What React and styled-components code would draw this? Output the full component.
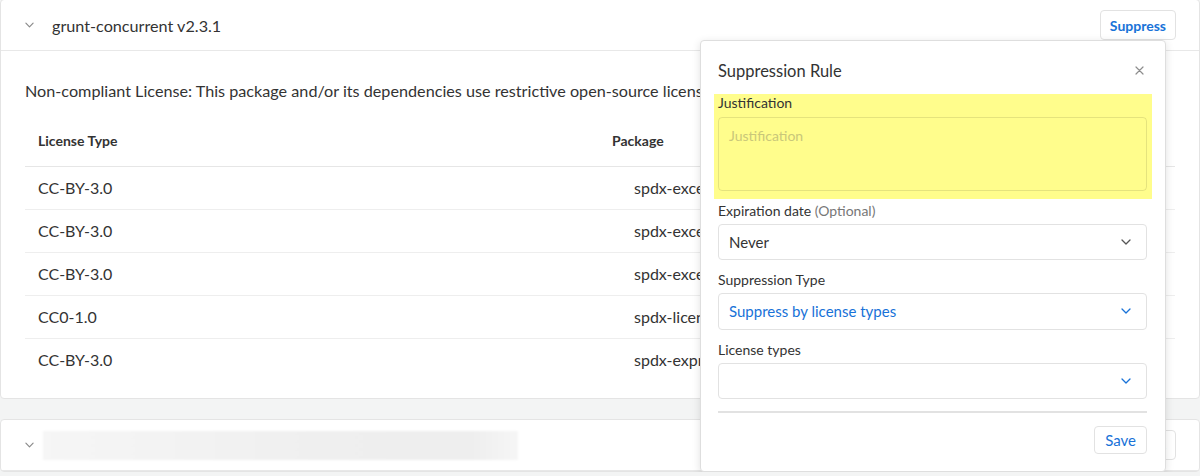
import React from "react";
import styled, { createGlobalStyle } from "styled-components";

const GlobalStyle = createGlobalStyle`
  html, body { margin: 0; padding: 0; }
  body {
    background: #f3f4f4;
    font-family: Lato, "Noto Sans", sans-serif;
    color: #333;
    overflow: hidden;
  }
  * { box-sizing: border-box; }
`;

const Page = styled.div`
  position: relative;
  margin-top: -1px;
  width: 1200px;
`;

const Card = styled.section`
  background: #fff;
  border: 1px solid #e4e4e4;
  border-radius: 4px;
  & + & { margin-top: 20px; }
`;

const CardHeader = styled.div`
  display: flex;
  align-items: center;
  height: 51px;
  padding: 0 23px 0 24px;
  border-bottom: 1px solid #e8e8e8;
`;

const Chevron = styled.svg`
  flex: none;
  width: 10px;
  height: 6px;
  color: ${(p) => p.$color || "#8a8a8a"};
`;

const Title = styled.h2`
  margin: 0 0 0 18px;
  font-size: 16.2px;
  font-weight: 400;
  color: #333;
`;

const Redacted = styled.div`
  margin-left: 9px;
  width: 475px;
  height: 29px;
  background: linear-gradient(90deg, #f6f6f6 0%, #efefef 60%, #eeeeee 90%, #f6f6f6 100%);
  filter: blur(1px);
`;

const OutlineButton = styled.button`
  margin-left: auto;
  height: ${(p) => p.$h || 30}px;
  padding: 0 ${(p) => p.$px || 9}px;
  background: #fff;
  border: 1px solid #e2e2e2;
  border-radius: 4px;
  color: #1872d8;
  font-family: Lato, sans-serif;
  font-size: ${(p) => p.$fs || 14}px;
  font-weight: ${(p) => p.$weight || 700};
  cursor: pointer;
`;

const CardBody = styled.div`
  padding: 28px 24px 17px 24px;
`;

const Description = styled.p`
  margin: 0;
  font-size: 16.2px;
  line-height: 24px;
  color: #333;
  white-space: nowrap;
`;

const Table = styled.table`
  width: 100%;
  margin-top: 13px;
  border-collapse: collapse;
  font-size: 16px;
`;

const Th = styled.th`
  text-align: left;
  font-size: 14px;
  font-weight: 700;
  color: #333;
  height: 50px;
  padding: 0 13px;
  border-bottom: 1px solid #e6e6e6;
  width: ${(p) => p.$w || "auto"};
`;

const Tr = styled.tr`
  & + & td { border-top: 1px solid #eeeeee; }
`;

const Td = styled.td`
  height: 43px;
  padding: 0 13px 0 ${(p) => p.$pl || 13}px;
  color: #333;
  white-space: nowrap;
`;

const Popover = styled.div`
  position: absolute;
  left: 700px;
  top: 41px;
  width: 466px;
  height: 432px;
  padding: 18px 18px 17px 17px;
  background: #fff;
  border: 1px solid #dedede;
  border-radius: 4px;
  box-shadow: 0 2px 8px rgba(0, 0, 0, 0.12);
  display: flex;
  flex-direction: column;
`;

const PopHeader = styled.div`
  display: flex;
  align-items: center;
  justify-content: space-between;
  height: 24px;
`;

const PopTitle = styled.h3`
  margin: 0;
  font-size: 16.5px;
  font-weight: 400;
  color: #333;
`;

const Close = styled.button`
  border: none;
  background: none;
  padding: 0;
  margin-right: 2px;
  width: 12px;
  height: 12px;
  display: flex;
  align-items: center;
  justify-content: center;
  color: #8d8d8d;
  cursor: pointer;
`;

const Highlight = styled.div`
  margin: 11px -5px 0 -4px;
  padding: 0 5px 8px 4px;
  background: #fffd8c;
  display: flex;
  flex-direction: column;
`;

const Label = styled.label`
  display: block;
  font-size: 14px;
  line-height: 18px;
  color: #333;
  margin-top: ${(p) => p.$mt || 0}px;
`;

const Muted = styled.span`
  color: #777;
`;

const TextArea = styled.textarea`
  margin-top: 5px;
  height: 74px;
  width: 100%;
  resize: none;
  padding: 9px 10px;
  border: 1px solid rgba(0, 0, 0, 0.1);
  border-radius: 4px;
  background: transparent;
  font-family: Lato, sans-serif;
  font-size: 14px;
  &::placeholder { color: #c9c77a; }
`;

const Select = styled.div`
  margin-top: 4px;
  height: 37px;
  display: flex;
  align-items: center;
  justify-content: space-between;
  padding: 0 15px 0 10px;
  border: 1px solid #e2e2e2;
  border-radius: 4px;
  font-size: 15px;
  color: ${(p) => (p.$blue ? "#1872d8" : "#333")};
`;

const Divider = styled.hr`
  margin: 12px 0 0;
  border: none;
  border-top: 2px solid #e2e2e2;
`;

const Footer = styled.div`
  margin-top: 13px;
  display: flex;
  justify-content: flex-end;
`;

const ChevronIcon = ({ color, w = 10, h = 6 }) => (
  <Chevron viewBox="0 0 10 6" $color={color} style={{ width: w, height: h }}>
    <path d="M1 1l4 4 4-4" fill="none" stroke="currentColor" strokeWidth="1.3" strokeLinecap="round" strokeLinejoin="round" />
  </Chevron>
);

const rows = [
  ["CC-BY-3.0", "spdx-exceptions"],
  ["CC-BY-3.0", "spdx-exceptions"],
  ["CC-BY-3.0", "spdx-exceptions"],
  ["CC0-1.0", "spdx-license-ids"],
  ["CC-BY-3.0", "spdx-expression-parse"],
];

export default function App() {
  return (
    <>
      <GlobalStyle />
      <Page>
        <Card>
          <CardHeader>
            <ChevronIcon w={9} h={6} />
            <Title>grunt-concurrent v2.3.1</Title>
            <OutlineButton>Suppress</OutlineButton>
          </CardHeader>
          <CardBody>
            <Description>
              Non-compliant License: This package and/or its dependencies use restrictive open-source licenses that do not comply with your policy.
            </Description>
            <Table>
              <thead>
                <tr>
                  <Th $w="574px">License Type</Th>
                  <Th>Package</Th>
                </tr>
              </thead>
              <tbody>
                {rows.map(([lic, pkg], i) => (
                  <Tr key={i}>
                    <Td>{lic}</Td>
                    <Td $pl={35}>{pkg}</Td>
                  </Tr>
                ))}
              </tbody>
            </Table>
          </CardBody>
        </Card>
        <Card>
          <CardHeader>
            <ChevronIcon w={9} h={6} />
            <Redacted />
            <OutlineButton>Suppress</OutlineButton>
          </CardHeader>
        </Card>

        <Popover>
          <PopHeader>
            <PopTitle>Suppression Rule</PopTitle>
            <Close aria-label="Close">
              <svg width="9" height="9" viewBox="0 0 9 9">
                <path d="M1 1l7 7M8 1L1 8" stroke="currentColor" strokeWidth="1.2" strokeLinecap="round" />
              </svg>
            </Close>
          </PopHeader>
          <Highlight>
            <Label>Justification</Label>
            <TextArea placeholder="Justification" />
          </Highlight>
          <Label $mt={3}>
            Expiration date <Muted>(Optional)</Muted>
          </Label>
          <Select>
            <span>Never</span>
            <ChevronIcon color="#555" w={10} h={6} />
          </Select>
          <Label $mt={11}>Suppression Type</Label>
          <Select $blue>
            <span>Suppress by license types</span>
            <ChevronIcon color="#1872d8" w={10} h={6} />
          </Select>
          <Label $mt={11}>License types</Label>
          <Select $blue>
            <span />
            <ChevronIcon color="#1872d8" w={10} h={6} />
          </Select>
          <Divider />
          <Footer>
            <OutlineButton $h={28} $px={10} $fs={15} $weight={400}>Save</OutlineButton>
          </Footer>
        </Popover>
      </Page>
    </>
  );
}
